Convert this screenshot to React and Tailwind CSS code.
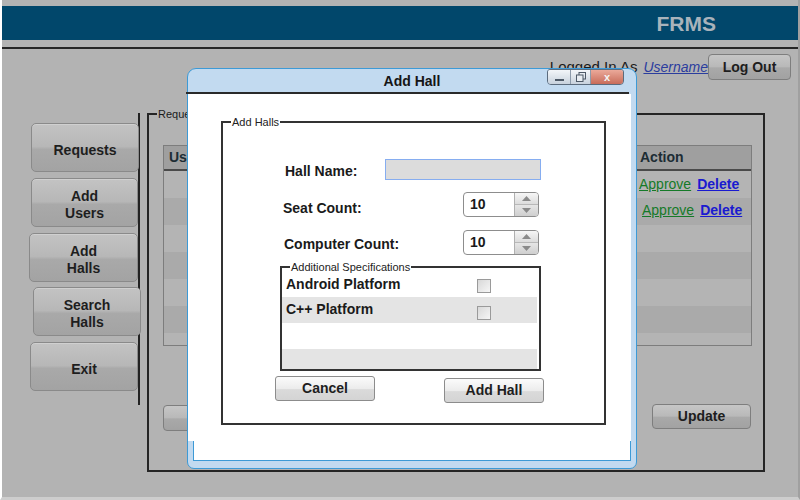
import React from "react";

const navBtn =
  "flex items-center justify-center text-center pt-[5px] text-[14px] leading-[17px] font-bold text-[#1e1e1e] rounded-[5px] border border-[#8a8a8a] bg-[linear-gradient(#c3c3c3,#b7b7b7_48%,#a9a9a9_54%,#a3a3a3)] shadow-[inset_0_1px_0_#d0d0d0]";
const grayBtn =
  "flex items-center justify-center text-[14px] font-bold text-[#1e1e1e] rounded-[4px] border border-[#7e7e7e] bg-[linear-gradient(#c6c6c6,#b9b9b9_48%,#a9a9a9_54%,#a2a2a2)]";
const whiteBtn =
  "flex items-center justify-center text-[14px] font-bold text-[#1e1e1e] rounded-[3px] border border-[#8c8c8c] bg-[linear-gradient(#fbfbfb,#ececec_50%,#dadada_55%,#d4d4d4)]";

function Spinner() {
  return (
    <div className="w-[76px] h-[25px] rounded-[4px] border border-[#8d8d8d] bg-white flex overflow-hidden">
      <div className="flex-1 flex items-center pl-[6px] text-[14px] font-bold text-[#1a1a1a]">10</div>
      <div className="w-[24px] flex flex-col border-l border-[#b0b0b0]">
        <div className="flex-1 flex items-center justify-center bg-[linear-gradient(#f6f6f6,#dcdcdc)] border-b border-[#b8b8b8]">
          <svg width="9" height="5" viewBox="0 0 9 5"><path d="M0 5 L4.5 0 L9 5 Z" fill="#8a8a8a" /></svg>
        </div>
        <div className="flex-1 flex items-center justify-center bg-[linear-gradient(#e6e6e6,#cfcfcf)]">
          <svg width="9" height="5" viewBox="0 0 9 5"><path d="M0 0 L4.5 5 L9 0 Z" fill="#8a8a8a" /></svg>
        </div>
      </div>
    </div>
  );
}

function Check() {
  return <div className="w-[14px] h-[14px] border border-[#9a9a9a] bg-[linear-gradient(135deg,#d8d8d8,#f6f6f6)]" />;
}

const rows = [0, 1, 2, 3, 4, 5, 6];

export default function App() {
  return (
    <div className="w-[800px] h-[500px] relative overflow-hidden bg-[#b3b3b3] font-['Liberation_Sans',Arial,sans-serif] text-[#1a1a1a] border-l-2 border-l-white border-r-2 border-r-[#a0a0a0] border-b-[3px] border-b-[#cdcdcd]">
      {/* header */}
      <div className="mt-[6px] h-[34px] bg-[#01476b] flex items-center justify-end pr-[82px]">
        <span className="text-[21px] font-bold leading-none text-[#a9b3bb]">FRMS</span>
      </div>
      <div className="mt-[7px] h-[2px] bg-[#262626]" />

      {/* logged in row */}
      <div className="mt-[5px] h-[26px] flex items-center justify-end pr-[7px]">
        <span className="text-[15px] text-[#1a1a1a]">Logged In As</span>
        <span className="ml-[6px] text-[14px] italic underline text-[#2b3d9e]">Username</span>
        <div className={grayBtn + " w-[83px] h-[26px]"}>Log Out</div>
      </div>

      {/* main */}
      <div className="mt-[33px] flex items-start">
        <div className="w-[138px] h-[292px] border-r-2 border-[#222] pt-[10px] flex flex-col items-start">
          <div className={navBtn + " ml-[29px] w-[108px] h-[49px]"}>Requests</div>
          <div className={navBtn + " mt-[6px] ml-[29px] w-[107px] h-[49px]"}>Add<br />Users</div>
          <div className={navBtn + " mt-[6px] ml-[27px] w-[109px] h-[49px]"}>Add<br />Halls</div>
          <div className={navBtn + " mt-[5px] ml-[31px] w-[108px] h-[49px] relative"}>Search<br />Halls</div>
          <div className={navBtn + " mt-[6px] ml-[28px] w-[108px] h-[49px]"}>Exit</div>
        </div>

        <div className="ml-[7px] w-[618px] h-[359px] border-2 border-[#252525] relative">
          <span className="absolute left-[8px] -top-[8px] px-[1px] bg-[#b3b3b3] text-[11px] leading-[14px]">Requests</span>
          <div className="ml-[14px] mt-[30px] w-[589px] h-[201px] border border-[#7d7d7d] bg-[#b4b4b4] flex flex-col overflow-hidden">
            <div className="h-[25px] shrink-0 bg-[#9f9f9f] border-b-2 border-[#4a4a4a] flex items-center text-[14px] font-bold text-[#1c2c34]">
              <div className="w-[110px] pl-[5px]">Username</div>
              <div className="w-[120px] pl-[5px]">Hall</div>
              <div className="w-[120px] pl-[5px]">Date</div>
              <div className="w-[122px] pl-[5px]">Time</div>
              <div className="flex-1 pl-[4px]">Action</div>
            </div>
            {rows.map((r) => (
              <div key={r} className={"h-[27px] shrink-0 flex items-center " + (r % 2 === 1 ? "bg-[#aaaaaa]" : "bg-[#b4b4b4]")}>
                <div className="w-[472px]" />
                {r < 2 && (
                  <div className={"flex-1 flex items-center gap-[6px] " + (r === 1 ? "pl-[6px] -mt-[3px]" : "pl-[3px]")}>
                    <span className="text-[14px] underline text-[#157a28]">Approve</span>
                    <span className="text-[14px] font-bold underline text-[#1a1ad0]">Delete</span>
                  </div>
                )}
              </div>
            ))}
          </div>
          <div className="mt-[58px] flex items-start">
            <div className={grayBtn + " ml-[14px] w-[100px] h-[26px] mt-[1px]"}>Back</div>
            <div className={grayBtn + " ml-auto mr-[12px] w-[99px] h-[25px]"}>Update</div>
          </div>
        </div>
      </div>

      {/* dialog */}
      <div className="absolute left-[185px] top-[68px] w-[450px] h-[401px] rounded-t-[9px] rounded-b-[7px] border border-[#3d9ad6] bg-[#c2daf0]">
        <div className="h-[23px] flex items-center justify-center relative">
          <span className="text-[14px] font-bold text-[#151515] mt-[1px]">Add Hall</span>
          <div className="absolute left-[359px] top-[0px] h-[16px] w-[77px] flex rounded-[4px] rounded-t-[3px] border border-[#5b6b7d] overflow-hidden">
            <div className="w-[23px] bg-[linear-gradient(#f3f6f9,#c8d2dd)] border-r border-[#8c9aaa] flex items-end justify-center pb-[3px]">
              <div className="w-[9px] h-[2px] bg-[#4d5967]" />
            </div>
            <div className="w-[20px] bg-[linear-gradient(#f3f6f9,#c8d2dd)] border-r border-[#8c9aaa] flex items-center justify-center">
              <svg width="10" height="10" viewBox="0 0 10 10">
                <rect x="3" y="0.5" width="6.5" height="6.5" fill="none" stroke="#4d5967" />
                <rect x="0.5" y="3" width="6.5" height="6.5" fill="#e8edf2" stroke="#4d5967" />
              </svg>
            </div>
            <div className="flex-1 bg-[linear-gradient(#eba99a,#c86c5a)] flex items-center justify-center">
              <span className="text-[11px] font-bold leading-none text-[#f4f4f4]">x</span>
            </div>
          </div>
        </div>
        <div className="h-[2px] bg-[#2a2a2a] -ml-[2px] w-[443px]" />
        <div className="ml-[5px] mr-[5px] h-[367px] bg-white border-x border-b border-[#3d9ad6]">
          <div className="-ml-[6px] w-[443px] h-[347px] bg-white pt-[27px]">
            <div className="ml-[33px] w-[385px] h-[304px] border-2 border-[#333] relative flex flex-col items-start">
              <span className="absolute left-[8px] -top-[8px] px-[1px] bg-white text-[11px] leading-[14px] text-[#222]">Add Halls</span>

              <div className="mt-[36px] h-[21px] flex items-center">
                <span className="ml-[62px] w-[100px] text-[14px] font-bold mt-[3px]">Hall Name:</span>
                <div className="w-[156px] h-[21px] bg-[#dcdcdc] border border-[#86adf0]" />
              </div>

              <div className="mt-[12px] h-[25px] flex items-center">
                <span className="ml-[60px] w-[180px] text-[14px] font-bold mt-[7px]">Seat Count:</span>
                <Spinner />
              </div>

              <div className="mt-[13px] h-[25px] flex items-center">
                <span className="ml-[61px] w-[179px] text-[14px] font-bold mt-[4px]">Computer Count:</span>
                <Spinner />
              </div>

              <div className="mt-[11px] ml-[57px] w-[261px] h-[105px] border-2 border-[#333] relative pt-[2px] pr-[2px]">
                <span className="absolute left-[8px] -top-[8px] px-[1px] bg-white text-[11px] leading-[14px] text-[#222]">Additional Specifications</span>
                <div className="h-[27px] flex items-center bg-white">
                  <span className="ml-[4px] w-[191px] text-[14px] font-bold mt-[2px]">Android Platform</span>
                  <div className="mt-[4px]"><Check /></div>
                </div>
                <div className="h-[26px] flex items-center bg-[#e4e4e4]">
                  <span className="ml-[4px] w-[191px] text-[14px] font-bold -mt-[1px]">C++ Platform</span>
                  <div className="mt-[5px]"><Check /></div>
                </div>
                <div className="h-[26px] bg-white" />
                <div className="h-[20px] bg-[#e4e4e4]" />
              </div>

              <div className="mt-[5px] flex items-start">
                <div className={whiteBtn + " ml-[52px] w-[100px] h-[25px]"}>Cancel</div>
                <div className={whiteBtn + " ml-[69px] mt-[2px] w-[100px] h-[25px]"}>Add Hall</div>
              </div>
            </div>
          </div>
        </div>
      </div>
    </div>
  );
}
